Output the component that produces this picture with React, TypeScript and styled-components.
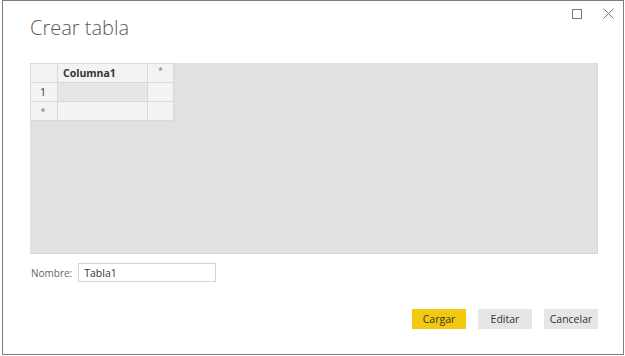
import React from "react";
import styled, { createGlobalStyle } from "styled-components";

const GlobalStyle = createGlobalStyle`
  html, body { margin: 0; padding: 0; background: #ffffff; }
  body { font-family: "Open Sans", "Noto Sans", sans-serif; }
  * { box-sizing: border-box; }
`;

const Window = styled.div`
  margin-left: 2px;
  width: 622px;
  height: 355px;
  border: 1px solid #7d7d7d;
  background: #ffffff;
  display: flex;
  flex-direction: column;
  padding: 0 25px 0 27px;
`;

const Header = styled.div`
  display: flex;
  justify-content: space-between;
  align-items: flex-start;
  height: 62px;
`;

const Title = styled.h1`
  margin: 14px 0 0 0;
  font-family: "Open Sans", sans-serif;
  font-weight: 300;
  font-size: 20px;
  line-height: 26px;
  color: #5a5a5a;
`;

const Controls = styled.div`
  display: flex;
  align-items: center;
  gap: 21px;
  margin-top: 7px;
  margin-right: -16px;
`;

const ControlButton = styled.button`
  border: none;
  background: transparent;
  padding: 0;
  width: 11px;
  height: 11px;
  display: flex;
  align-items: center;
  justify-content: center;
  color: #7a7a7a;
  cursor: pointer;
`;

const GridArea = styled.div`
  height: 191px;
  background: #e1e1e1;
  border: 1px solid #d6d6d6;
  border-top: none;
  border-left: none;
`;

const Table = styled.table`
  border-collapse: collapse;
  font-size: 10.5px;
  color: #333;
  table-layout: fixed;
`;

const HeadCell = styled.th<{ $w: number }>`
  width: ${(p) => p.$w}px;
  height: 19px;
  padding: 0 0 0 5px;
  background: #f3f3f3;
  border: 1px solid #d9d9d9;
  text-align: left;
  font-weight: 700;
  line-height: 17px;
`;

const StarCell = styled.th<{ $w: number }>`
  width: ${(p) => p.$w}px;
  height: 19px;
  padding: 0;
  background: #f3f3f3;
  border: 1px solid #d9d9d9;
  text-align: center;
  vertical-align: top;
  font-weight: 400;
  font-size: 9px;
  color: #777;
  line-height: 14px;
`;

const RowHead = styled.td<{ $small?: boolean }>`
  height: 19px;
  padding: 0 2px 0 0;
  background: #f3f3f3;
  border: 1px solid #d9d9d9;
  text-align: center;
  font-size: ${(p) => (p.$small ? "9px" : "10.5px")};
  color: ${(p) => (p.$small ? "#777" : "#333")};
  line-height: 17px;
`;

const Cell = styled.td<{ $selected?: boolean }>`
  height: 19px;
  padding: 0;
  background: ${(p) => (p.$selected ? "#e6e6e6" : "#f3f3f3")};
  border: 1px solid #d9d9d9;
`;

const NameRow = styled.div`
  display: flex;
  align-items: center;
  margin-top: 9px;
  gap: 6px;
  padding-left: 1px;
`;

const Label = styled.label`
  font-size: 10px;
  color: #666;
`;

const NameInput = styled.input`
  width: 138px;
  height: 19px;
  border: 1px solid #d4d4d4;
  padding: 0 5px;
  font-family: "Open Sans", sans-serif;
  font-size: 10.5px;
  color: #333;
  outline: none;
`;

const Footer = styled.div`
  display: flex;
  justify-content: flex-end;
  gap: 12px;
  margin-top: 27px;
`;

const Button = styled.button<{ $primary?: boolean }>`
  width: 54px;
  height: 20px;
  border: none;
  padding: 0;
  background: ${(p) => (p.$primary ? "#f2c811" : "#e6e6e6")};
  font-family: "Open Sans", sans-serif;
  font-size: 10.5px;
  color: #333;
  cursor: pointer;
`;

export default function App() {
  return (
    <>
      <GlobalStyle />
      <Window>
        <Header>
          <Title>Crear tabla</Title>
          <Controls>
            <ControlButton aria-label="Maximizar">
              <svg width="10" height="10" viewBox="0 0 10 10">
                <rect x="0.5" y="0.5" width="9" height="9" fill="none" stroke="currentColor" strokeWidth="1" />
              </svg>
            </ControlButton>
            <ControlButton aria-label="Cerrar">
              <svg width="11" height="11" viewBox="0 0 11 11">
                <path d="M0.5 0.5 L10.5 10.5 M10.5 0.5 L0.5 10.5" stroke="currentColor" strokeWidth="1" fill="none" />
              </svg>
            </ControlButton>
          </Controls>
        </Header>
        <GridArea>
          <Table>
            <thead>
              <tr>
                <StarCell $w={27} />
                <HeadCell $w={90}>Columna1</HeadCell>
                <StarCell $w={26}>*</StarCell>
              </tr>
            </thead>
            <tbody>
              <tr>
                <RowHead>1</RowHead>
                <Cell $selected />
                <Cell />
              </tr>
              <tr>
                <RowHead $small>*</RowHead>
                <Cell />
                <Cell />
              </tr>
            </tbody>
          </Table>
        </GridArea>
        <NameRow>
          <Label htmlFor="nombre">Nombre:</Label>
          <NameInput id="nombre" defaultValue="Tabla1" />
        </NameRow>
        <Footer>
          <Button $primary>Cargar</Button>
          <Button>Editar</Button>
          <Button>Cancelar</Button>
        </Footer>
      </Window>
    </>
  );
}
